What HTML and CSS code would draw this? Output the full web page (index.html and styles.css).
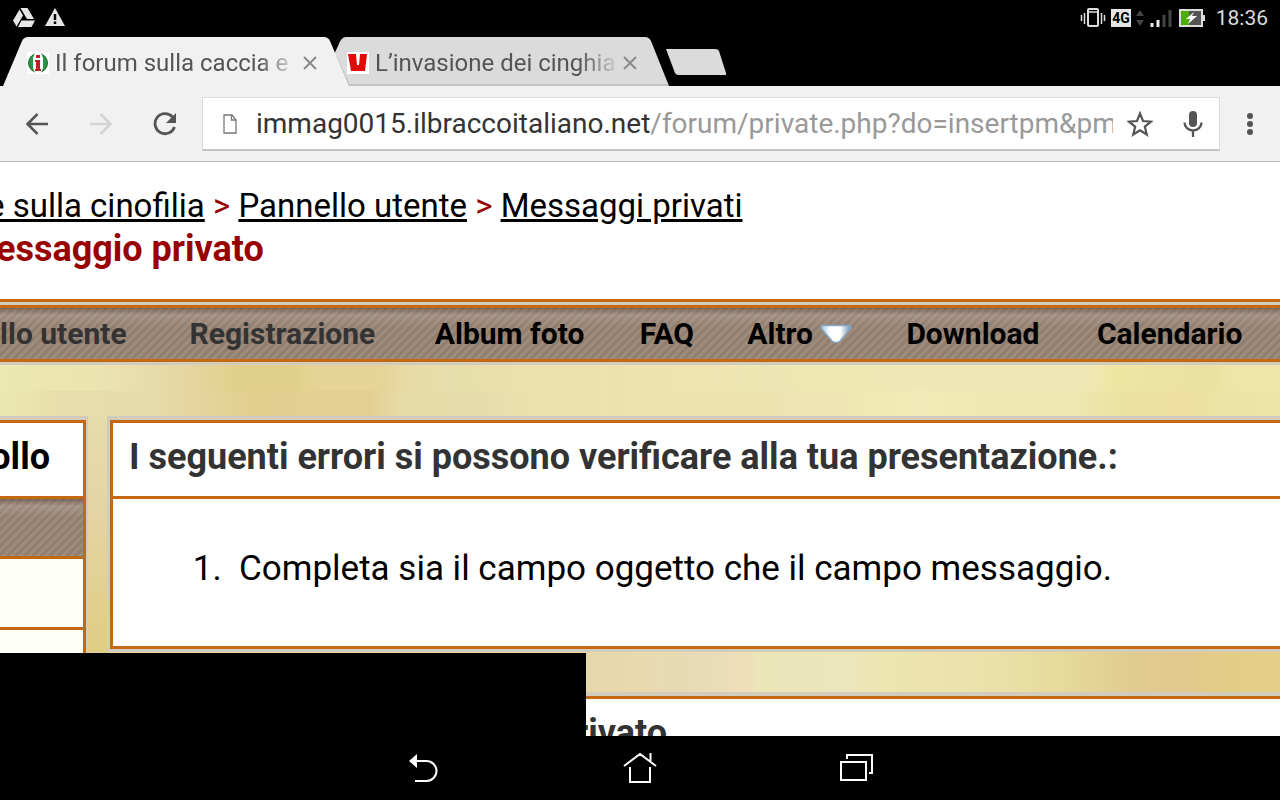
FILE: index.html
```html
<!DOCTYPE html>
<html lang="it">
<head>
<meta charset="utf-8">
<title>Messaggio privato</title>
<link rel="stylesheet" href="styles.css">
</head>
<body>
<div class="device">
  <header class="status">
    <div class="status-side">
      <svg width="24" height="22" viewBox="0 0 24 22"><path fill="#e6e6e6" d="M8.500 1h7l6.500 11h-7zM7.500 2.500l3.500 6L4.500 19.500 1 13.500zM9.500 13.500H23L19.500 20H6z"/></svg>
      <svg width="22" height="22" viewBox="0 0 22 22"><path fill="#e6e6e6" d="M11 1l10 18H1z"/><path d="M11 7v6M11 14.500v2.500" stroke="#000" stroke-width="2.500"/></svg>
    </div>
    <div class="status-side status-right">
      <svg width="26" height="22" viewBox="0 0 26 22" fill="none" stroke="#ddd" stroke-width="1.500"><path d="M1.500 8v6M4.500 6v11M21.500 6v11M24.500 8v6"/><rect x="8" y="2" width="10" height="17" rx="1" stroke-width="2"/><path d="M8 5h10" stroke-width="1.500"/></svg>
      <span class="badge">4G</span>
      <svg width="8" height="20" viewBox="0 0 8 20" fill="#444"><path d="M4 2l4 6H0zM4 18l4-6H0z"/></svg>
      <svg width="24" height="20" viewBox="0 0 24 20"><path d="M3 15v4M9 12v7" stroke="#eee" stroke-width="3"/><path d="M15 7v12M21 2v17" stroke="#444" stroke-width="3"/></svg>
      <svg width="28" height="20" viewBox="0 0 28 20"><rect x="2" y="2" width="22" height="16" fill="#555" stroke="#ddd" stroke-width="2"/><path fill="#4fae05" d="M3 3h8v14H3z"/><path fill="#ddd" d="M25 7h2v6h-2z"/><path fill="#fff" d="M16 4L8 11h4l-2 5 9-8h-5z"/></svg>
      <time>18:36</time>
    </div>
  </header>

  <div class="tabs">
    <svg class="tab-shapes" viewBox="0 0 730 50" width="730" height="50"><path fill="#dbdbdb" d="M331 25l7-15q3-9 8-9h299q4 0 6 4l18 45H340z"/><path fill="none" stroke="#aaa" d="M336 20l13 29h319"/><path fill="#f1f1f1" d="M3 50L22 5q2-4 6-4h296q4 0 6 4l19 45z"/><path fill="#dbdbdb" d="M666 13h49q3 0 4 2l7 22v2h-47q-3 0-4-2z"/></svg>
    <div class="tab">
      <svg width="22" height="22" viewBox="0 0 22 22"><path fill="#fff" d="M0 0h22v22H0z"/><circle cx="11" cy="11" r="9.500" fill="#2e9244" stroke="#176a2a"/><path fill="#fff" d="M8 1h6l2 5v10l-2 5H8l-2-5V6z"/><path fill="#c31f25" d="M9 3h4v3H9zM8 8h5v9h1v2H8v-2h1v-7H8z"/></svg>
      <span class="tab-title">Il forum sulla caccia e</span>
      <button class="close" aria-label="Chiudi scheda"><svg width="14" height="14" viewBox="0 0 14 14"><path d="M1 1l12 12M13 1L1 13" stroke="#8a8a8a" stroke-width="2"/></svg></button>
    </div>
    <div class="tab">
      <svg width="22" height="22" viewBox="0 0 22 22"><path fill="#fff" d="M0 0h22v22H0z"/><path fill="#e00b08" d="M1 2h8l1 11h2l1-11h7l-2 17H4z"/></svg>
      <span class="tab-title">L’invasione dei cinghia</span>
      <button class="close" aria-label="Chiudi scheda"><svg width="14" height="14" viewBox="0 0 14 14"><path d="M1 1l12 12M13 1L1 13" stroke="#8a8a8a" stroke-width="2"/></svg></button>
    </div>
  </div>

  <div class="toolbar">
    <button aria-label="Indietro"><svg width="24" height="24" viewBox="0 0 24 24" fill="none" stroke="#555" stroke-width="2.500"><path d="M23 12H3M12.500 2L2.500 12l10 10"/></svg></button>
    <button aria-label="Avanti"><svg width="24" height="24" viewBox="0 0 24 24" fill="none" stroke="#d4d4d4" stroke-width="2.500"><path d="M1 12h20M11.500 2l10 10-10 10"/></svg></button>
    <button aria-label="Ricarica"><svg width="24" height="24" viewBox="0 0 24 24"><path d="M21.500 15a10 10 0 1 1-2-10" fill="none" stroke="#555" stroke-width="2.800"/><path fill="#555" d="M23 1v10H13z"/></svg></button>
    <div class="address">
      <svg width="14" height="20" viewBox="0 0 14 20" fill="none" stroke="#777" stroke-width="1.300"><path d="M1 1h8l4 5v13H1zM8.500 1v5H13"/></svg>
      <div class="url">immag0015.ilbraccoitaliano.net<span>/forum/private.php?do=insertpm&amp;pm</span></div>
      <button aria-label="Aggiungi ai preferiti"><svg width="26" height="26" viewBox="0 0 26 26"><path d="M13 2.500l3 7.500 8 .6-6.200 5.100 2 7.800-6.800-4.300-6.800 4.300 2-7.800L2 10.600l8-.6z" fill="none" stroke="#555" stroke-width="2.200"/></svg></button>
      <button aria-label="Ricerca vocale"><svg width="20" height="28" viewBox="0 0 20 28"><rect x="6" y="1" width="8" height="16" rx="4" fill="#555"/><path d="M1.500 12.500a8.500 8 0 0 0 17 0M10 21v6" fill="none" stroke="#555" stroke-width="2.300"/></svg></button>
    </div>
    <button class="more" aria-label="Menu"><svg width="6" height="22" viewBox="0 0 6 22" fill="#555"><circle cx="3" cy="3" r="3"/><circle cx="3" cy="11" r="3"/><circle cx="3" cy="19" r="3"/></svg></button>
  </div>

  <main class="page">
    <div class="crumbs">
      <div class="trail"><a href="#">e sulla cinofilia</a> &gt; <a href="#">Pannello utente</a> &gt; <a href="#">Messaggi privati</a></div>
      <h1>essaggio privato</h1>
    </div>
    <nav class="menu stripes">
      <a class="dim first" href="#">llo utente</a>
      <a class="dim" href="#">Registrazione</a>
      <a href="#">Album foto</a>
      <a href="#">FAQ</a>
      <a href="#">Altro <svg width="32" height="20" viewBox="0 0 32 20"><defs><linearGradient id="arrow" x1="0" x2="1"><stop offset="0" stop-color="#a9cbe6"/><stop offset=".3" stop-color="#fff"/><stop offset=".65" stop-color="#fff"/><stop offset="1" stop-color="#6f92ae"/></linearGradient></defs><path d="M1.500 1.500h29v3L20 17q-4 3-8 0L1.500 4.500z" fill="url(#arrow)" stroke="#86a9c6" stroke-width="1.500"/></svg></a>
      <a href="#">Download</a>
      <a href="#">Calendario</a>
    </nav>
    <div class="content">
      <aside class="side">
        <div class="side-title">ollo</div>
        <div class="side-band stripes"></div>
        <div class="side-row"></div>
        <div class="side-row"></div>
      </aside>
      <div class="column">
        <section class="panel">
          <h2>I seguenti errori si possono verificare alla tua presentazione.:</h2>
          <ol><li>Completa sia il campo oggetto che il campo messaggio.</li></ol>
        </section>
        <section class="panel next"><h2>rivato</h2></section>
      </div>
    </div>
    <div class="unpainted"></div>
  </main>

  <footer class="keys">
    <button aria-label="Indietro"><svg width="36" height="36" viewBox="0 0 36 36"><path d="M11 11h9.500a10 10 0 0 1 0 20H9" fill="none" stroke="#fff" stroke-width="2"/><path fill="#fff" d="M3 11l8-7v14z"/></svg></button>
    <button aria-label="Home"><svg width="36" height="36" viewBox="0 0 36 36" fill="none" stroke="#fff" stroke-width="2"><path d="M2 16L18 4l16 12M28.500 3v9M8 17v15h20V17"/></svg></button>
    <button aria-label="App recenti"><svg width="36" height="36" viewBox="0 0 36 36" fill="none" stroke="#fff" stroke-width="2"><path d="M3 12h25v18H3zM9 9V5h25v18h-3"/></svg></button>
  </footer>
</div>
</body>
</html>
```
FILE: styles.css
```css
* { box-sizing: border-box; }
body { margin: 0; background: #000; font-family: Roboto, "Noto Sans", sans-serif; color: #000; }
svg { display: block; flex: none; }
button { padding: 0; border: 0; background: none; display: flex; justify-content: center; align-items: center; }
a { color: inherit; }

.device { height: 100vh; display: flex; flex-direction: column; overflow: hidden; }

.status { flex: none; height: 36px; padding: 0 12px; display: flex; justify-content: space-between; align-items: center; color: #ddd; }
.status-side { display: flex; align-items: center; gap: 8px; }
.status-right { gap: 5px; }
.badge { padding: 0 1px; background: #e6e6e6; color: #000; font-size: 14px; line-height: 18px; font-weight: 700; }
.status time { font-size: 21px; margin-left: 5px; }

.tabs { flex: none; height: 50px; position: relative; display: flex; align-items: center; padding: 3px 0 0 27px; gap: 28px; }
.tab-shapes { position: absolute; left: 0; top: 0; }
.tab { position: relative; width: 292px; display: flex; align-items: center; }
.tab-title { flex: 1; margin: 0 7px 0 6px; overflow: hidden; white-space: nowrap; font-size: 24px; line-height: 36px; color: #555; -webkit-mask-image: linear-gradient(90deg, #000 85%, transparent 103%); mask-image: linear-gradient(90deg, #000 85%, transparent 103%); }
.close { width: 18px; height: 24px; }

.toolbar { flex: none; height: 76px; display: flex; align-items: center; background: #f1f1f1; border-bottom: 1px solid #bbb; padding: 0 14px 0 5px; }
.toolbar > button { width: 64px; height: 48px; }
.toolbar > .more { width: 32px; margin-left: 14px; }
.address { flex: 1; min-width: 0; height: 54px; margin-left: 5px; padding: 1px 0 0 20px; display: flex; align-items: center; background: #fff; border: 1px solid #ddd; border-bottom: 2px solid #c4c4c4; }
.url { flex: 1; min-width: 0; margin-left: 19px; overflow: hidden; white-space: nowrap; font-size: 28px; line-height: 40px; color: #333; }
.url span { color: #999; }
.address button { width: 53px; height: 40px; }

.page { flex: 1; min-height: 0; position: relative; overflow: hidden; display: flex; flex-direction: column; background: #fff; }
.crumbs { flex: none; height: 137px; padding-top: 23px; white-space: nowrap; color: #900; }
.trail { margin-left: -13px; font-size: 33px; line-height: 42px; text-decoration-thickness: 2px; }
.trail a { color: #000; }
h1 { margin: 0 0 0 -4px; font-size: 36px; line-height: 45px; font-weight: 700; }

.stripes { background-color: #917d6d; background-image: linear-gradient(rgba(80,55,45,.4), rgba(220,205,200,.2) 7px, transparent 18px), repeating-linear-gradient(135deg, rgba(255,255,255,.12) 0 1px, transparent 3px 4px, rgba(255,255,255,.12) 6px); }
.menu { flex: none; position: relative; margin-top: 6px; height: 57px; display: grid; grid-template-columns: 157fr 248fr 207fr 108fr 158fr 189fr 205fr 8fr; align-items: center; justify-items: center; border: solid #c46812; border-width: 3px 0; box-shadow: 0 3px #d2ccbc, 0 -3px #d2ccbc, 0 -6px #c46812; font-size: 30px; line-height: 40px; font-weight: 700; white-space: nowrap; }
.menu a { display: flex; align-items: center; gap: 7px; text-decoration: none; }
.menu .dim { color: #333; }
.menu .first { justify-self: end; margin-right: 32px; }

.content { flex: 1; min-height: 0; display: flex; gap: 19px; padding-top: 54px; background:
  linear-gradient(90deg, #ebe8b0, #ece4b0 100px, #e6dcaa 150px, #e6d5a0 190px, #e0d08a 240px 290px, #e6d498 320px 380px, #e8daa6 410px, #e6deaa 440px, #ebe2ae 540px, #eee2ac 620px, #f0e5b2 720px, #ece7b2 760px, #efe8b4 900px, #efe8b4 1090px, #efe6a4 1110px, #eae0a0 1210px, #efe6ab 1240px) 0 0 / 100% 29px no-repeat,
  linear-gradient(90deg, #ebe8b0, #e8deab 60px, #e6dcaa 150px, #e6d5a0 190px, #e2cf90 250px, #e3cf92 370px, #e7dba6 400px, #e6dcaa 480px, #ebe2ae 540px, #eee2ac 620px, #efe4b2 820px, #eee8b3 860px, #f2ecb8 920px, #eee8b3 980px, #eee8b3 1070px, #ebe2a2 1120px, #efdea2 1180px, #ebe2a4 1215px, #ede4aa) 0 0 / 100% 56px no-repeat,
  linear-gradient(#e8e0b0, #e5d4a4 40%, #e0cd86 75%, #e2cd8f) 0 0 / 110px 100% no-repeat,
  linear-gradient(90deg, #e5d7a8 586px, #e9dab0 640px, #e7dab4 690px, #eedfb9 750px, #ebe6b8 760px, #ece6bc 850px, #ebe6b0 880px, #ece3ae 930px, #eae0a8 1000px, #e6da9c 1060px, #e1cc90 1130px, #e1c88c 1190px, #e3cd88 1210px, #e3cf88); }
.side { flex: none; width: 88px; border: solid #d2ccbc; border-width: 4px 2px 0 0; display: flex; flex-direction: column; background: #fffffa; }
.side > div { border-right: 3px solid #c46812; border-top: 3px solid #c46812; }
.side-title { height: 76px; display: flex; justify-content: flex-end; padding-right: 33px; font-size: 36px; line-height: 68px; font-weight: 700; background: #fff; }
.side-band { height: 60px; }
.side-row { height: 71px; }
.column { flex: 1; min-width: 0; display: flex; flex-direction: column; gap: 40px; }
.panel { flex: none; border: solid #d2ccbc; border-width: 4px 0 3px 3px; background: #fff; }
.panel h2 { margin: 0; height: 76px; padding-left: 16px; border: solid #c46812; border-width: 3px 0 0 3px; font-size: 36px; line-height: 68px; font-weight: 700; color: #333; white-space: nowrap; }
.panel ol { margin: 0; height: 153px; border: solid #c46812; border-width: 3px 0 3px 3px; padding: 48px 0 0 126px; font-size: 35px; line-height: 44px; white-space: nowrap; }
.panel li::marker { content: counter(list-item) ".\00a0\00a0"; }
.next h2 { padding-left: 462px; }
.unpainted { position: absolute; left: 0; bottom: 0; width: 586px; height: 83px; background: #000; }

.keys { flex: none; height: 64px; display: flex; justify-content: center; align-items: center; gap: 180px; }
```
